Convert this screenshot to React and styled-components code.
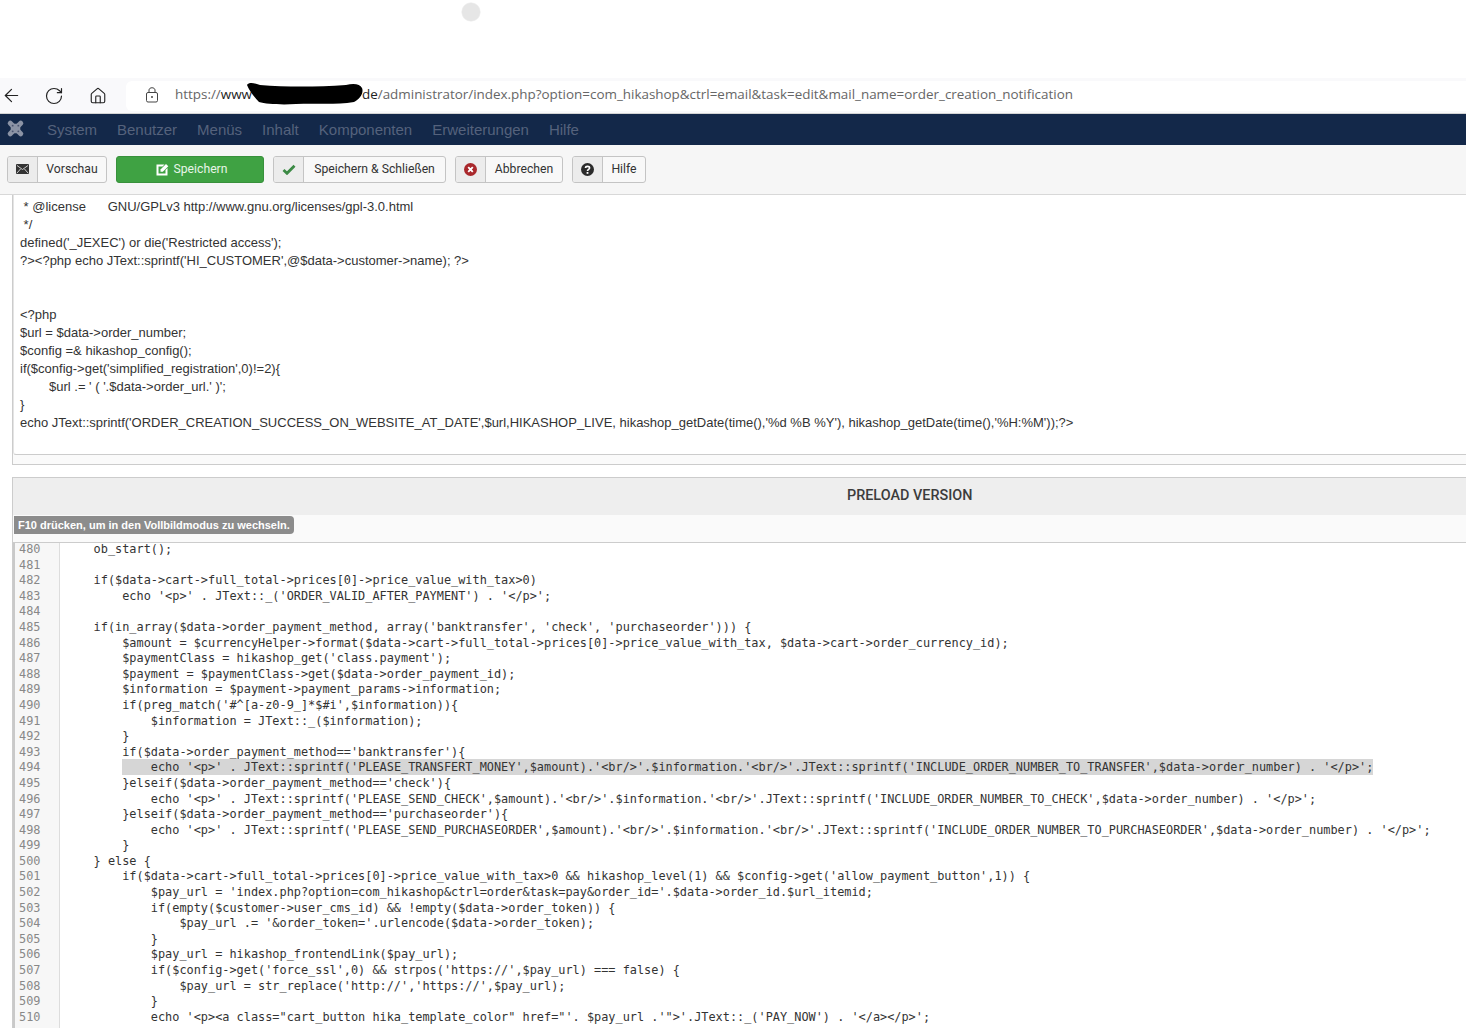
import styled, { createGlobalStyle } from 'styled-components';
import { ArrowLeft, RotateCw, Home } from 'lucide-react';

const GlobalStyle = createGlobalStyle`
  html, body {
    margin: 0;
    padding: 0;
    background: #ffffff;
  }
  body {
    font-family: 'Liberation Sans', Arial, sans-serif;
  }
`;

const Page = styled.div`
  width: 1466px;
  height: 1028px;
  overflow: hidden;
  position: relative;
  background: #fff;
`;

const BlankTop = styled.div`
  height: 78px;
  display: flex;
  padding-left: 461px;
  padding-top: 2px;
  box-sizing: border-box;
`;

const Spinner = styled.div`
  width: 20px;
  height: 20px;
  border-radius: 50%;
  background-color: #e6e6e6;
  background-image: radial-gradient(#a8a8a8 40%, transparent 45%);
  background-size: 2px 2px;
  mask-image: radial-gradient(circle, #000 60%, transparent 74%);
`;

const BrowserBar = styled.div`
  height: 35px;
  background: #f9f9fb;
  border-bottom: 1px solid #d4d4d4;
  display: flex;
  align-items: center;
  box-sizing: content-box;
`;

const NavIcon = styled.span`
  width: ${(p) => p.$w}px;
  display: flex;
  justify-content: center;
  color: #222;
`;

const UrlBox = styled.div`
  flex: 1;
  height: 30px;
  background: #fff;
  border-radius: 6px 0 0 6px;
  display: flex;
  align-items: center;
  padding-left: 19px;
  margin-left: 16px;
  color: #444;
`;

const LockIcon = styled.svg`
  width: 14px;
  height: 17px;
  flex: none;
  position: relative;
  top: -1px;
`;

const UrlText = styled.div`
  font-family: 'Open Sans', sans-serif;
  font-size: 13.43px;
  line-height: 18px;
  margin: -3px 0 0 16px;
  color: #666;
  white-space: pre;
  display: flex;
  align-items: center;
  b {
    font-weight: 400;
    color: #222;
  }
`;

const Scribble = styled.svg`
  margin: 0 -1px 0 -6px;
  width: 117px;
  height: 22px;
  flex: none;
  position: relative;
  top: 0;
`;

const NavBar = styled.nav`
  height: 31px;
  background: #132849;
  display: flex;
  align-items: center;
  padding-left: 6px;
`;

const NavItem = styled.span`
  font-size: 15px;
  color: #55627c;
  margin-right: 20px;
`;

const Logo = styled.svg`
  width: 19px;
  height: 19px;
  margin-right: 22px;
  position: relative;
  top: -1px;
`;

const Toolbar = styled.div`
  height: 50px;
  box-sizing: border-box;
  background: #f6f6f6;
  border-bottom: 1px solid #d8d8d8;
  display: flex;
  align-items: center;
  padding: 0 0 1px 7px;
  gap: 9px;
`;

const ToolButton = styled.div`
  height: 27px;
  box-sizing: border-box;
  border: 1px solid #c4c4c4;
  border-radius: 3px;
  background: #f8f8f8;
  display: flex;
  align-items: center;
  font-family: Roboto, sans-serif;
  font-size: 12.2px;
  color: #333;
  width: ${(p) => p.$w}px;
  flex: none;
  overflow: hidden;
`;

const ToolIcon = styled.span`
  width: 29px;
  height: 100%;
  flex: none;
  background: #ececec;
  border-right: 1px solid #c4c4c4;
  display: flex;
  align-items: center;
  justify-content: center;
`;

const ToolLabel = styled.span`
  flex: 1;
  text-align: center;
  white-space: nowrap;
`;

const SaveButton = styled.div`
  width: 148px;
  height: 27px;
  border-radius: 3px;
  background: #3fa243;
  border: 1px solid #38913c;
  box-sizing: border-box;
  color: #e8f5e8;
  font-family: Roboto, sans-serif;
  font-size: 12.2px;
  display: flex;
  align-items: center;
  justify-content: center;
  gap: 5px;
  flex: none;
  padding-left: 3px;
`;

const SourcePanel = styled.div`
  margin-left: 12px;
  border-left: 1px solid #cccccc;
  border-bottom: 1px solid #cccccc;
  background: #fafafa;
  height: 270px;
  box-sizing: border-box;
`;

const SourceInner = styled.div`
  height: 260px;
  box-sizing: border-box;
  background: #fff;
  border-bottom: 1px solid #cccccc;
  padding: 3px 0 0 6px;
  border-left: 1px solid #e4e4e4;
  border-radius: 0 0 0 3px;
`;

const SourceLine = styled.div`
  font-size: 13px;
  line-height: 18px;
  height: 18px;
  color: #333;
  white-space: pre;
  padding-left: ${(p) => p.$indent || 0}px;
`;

const EditorPanel = styled.div`
  margin: 12px 0 0 12px;
  border-left: 1px solid #cccccc;
  border-top: 1px solid #cccccc;
`;

const EditorHead = styled.div`
  height: 37px;
  box-sizing: border-box;
  padding: 0 0 2px 834px;
  background: #eeeeee;
  display: flex;
  align-items: center;
  font-family: Roboto, sans-serif;
  font-size: 14.4px;
  font-weight: 500;
  color: #3c3c3c;
`;

const HintRow = styled.div`
  height: 28px;
  box-sizing: border-box;
  background: #fafafa;
  border-bottom: 1px solid #cccccc;
`;

const Hint = styled.span`
  display: inline-block;
  height: 18px;
  line-height: 18px;
  padding: 0 4px;
  margin-left: 1px;
  background: #8c8c8c;
  color: #fff;
  font-size: 11px;
  font-weight: 700;
  border-radius: 0 4px 4px 0;
  white-space: nowrap;
`;

const CodeArea = styled.div`
  border-left: 2px solid #c9c9c9;
  display: flex;
  flex-direction: column;
`;

const CodeRow = styled.div`
  display: flex;
  height: 15.6px;
  line-height: 12px;
  font-family: 'DejaVu Sans Mono', monospace;
  font-size: 11.88px;
  color: #333;
  white-space: pre;
`;

const Gutter = styled.span`
  width: 45px;
  box-sizing: border-box;
  padding-left: 4px;
  flex: none;
  color: #888;
  background: #f7f7f7;
  border-right: 1px solid #dddddd;
`;

const Code = styled.span`
  padding-left: 5px;
`;

const Mark = styled.span`
  background: #d6d6d6;
  padding: 1px 0;
`;

const navItems = ['System', 'Benutzer', 'Menüs', 'Inhalt', 'Komponenten', 'Erweiterungen', 'Hilfe'];

const sourceLines = [
  { t: ' * @license', extra: 'GNU/GPLv3 http://www.gnu.org/licenses/gpl-3.0.html' },
  { t: ' */' },
  { t: "defined('_JEXEC') or die('Restricted access');" },
  { t: "?><?php echo JText::sprintf('HI_CUSTOMER',@$data->customer->name); ?>" },
  { t: '' },
  { t: '' },
  { t: '<?php' },
  { t: '$url = $data->order_number;' },
  { t: '$config =& hikashop_config();' },
  { t: "if($config->get('simplified_registration',0)!=2){" },
  { t: "$url .= ' ( '.$data->order_url.' )';", indent: 29 },
  { t: '}' },
  { t: "echo JText::sprintf('ORDER_CREATION_SUCCESS_ON_WEBSITE_AT_DATE',$url,HIKASHOP_LIVE, hikashop_getDate(time(),'%d %B %Y'), hikashop_getDate(time(),'%H:%M'));?>" },
];

const codeLines = [
  '    ob_start();',
  '',
  '    if($data->cart->full_total->prices[0]->price_value_with_tax>0)',
  "        echo '<p>' . JText::_('ORDER_VALID_AFTER_PAYMENT') . '</p>';",
  '',
  "    if(in_array($data->order_payment_method, array('banktransfer', 'check', 'purchaseorder'))) {",
  '        $amount = $currencyHelper->format($data->cart->full_total->prices[0]->price_value_with_tax, $data->cart->order_currency_id);',
  "        $paymentClass = hikashop_get('class.payment');",
  '        $payment = $paymentClass->get($data->order_payment_id);',
  '        $information = $payment->payment_params->information;',
  "        if(preg_match('#^[a-z0-9_]*$#i',$information)){",
  '            $information = JText::_($information);',
  '        }',
  "        if($data->order_payment_method=='banktransfer'){",
  "            echo '<p>' . JText::sprintf('PLEASE_TRANSFERT_MONEY',$amount).'<br/>'.$information.'<br/>'.JText::sprintf('INCLUDE_ORDER_NUMBER_TO_TRANSFER',$data->order_number) . '</p>';",
  "        }elseif($data->order_payment_method=='check'){",
  "            echo '<p>' . JText::sprintf('PLEASE_SEND_CHECK',$amount).'<br/>'.$information.'<br/>'.JText::sprintf('INCLUDE_ORDER_NUMBER_TO_CHECK',$data->order_number) . '</p>';",
  "        }elseif($data->order_payment_method=='purchaseorder'){",
  "            echo '<p>' . JText::sprintf('PLEASE_SEND_PURCHASEORDER',$amount).'<br/>'.$information.'<br/>'.JText::sprintf('INCLUDE_ORDER_NUMBER_TO_PURCHASEORDER',$data->order_number) . '</p>';",
  '        }',
  '    } else {',
  "        if($data->cart->full_total->prices[0]->price_value_with_tax>0 && hikashop_level(1) && $config->get('allow_payment_button',1)) {",
  "            $pay_url = 'index.php?option=com_hikashop&ctrl=order&task=pay&order_id='.$data->order_id.$url_itemid;",
  '            if(empty($customer->user_cms_id) && !empty($data->order_token)) {',
  "                $pay_url .= '&order_token='.urlencode($data->order_token);",
  '            }',
  '            $pay_url = hikashop_frontendLink($pay_url);',
  "            if($config->get('force_ssl',0) && strpos('https://',$pay_url) === false) {",
  "                $pay_url = str_replace('http://','https://',$pay_url);",
  '            }',
  "            echo '<p><a class=\"cart_button hika_template_color\" href=\"'. $pay_url .'\">'.JText::_('PAY_NOW') . '</a></p>';",
];

function CodeLine({ number, text }) {
  // line 494 is the selected one in the editor
  const selected = number === 494;
  return (
    <CodeRow>
      <Gutter>{number}</Gutter>
      <Code>
        {selected ? (
          <>
            {text.slice(0, 8)}
            <Mark>{text.slice(8)}</Mark>
          </>
        ) : (
          text
        )}
      </Code>
    </CodeRow>
  );
}

function App() {
  return (
    <Page>
      <GlobalStyle />
      <BlankTop>
        <Spinner />
      </BlankTop>
      <BrowserBar>
        <NavIcon $w={22}>
          <ArrowLeft size={21} strokeWidth={1.4} />
        </NavIcon>
        <NavIcon $w={64}>
          <RotateCw size={20} strokeWidth={1.4} />
        </NavIcon>
        <NavIcon $w={24}>
          <Home size={18} strokeWidth={1.5} />
        </NavIcon>
        <UrlBox>
          <LockIcon viewBox="0 0 14 17">
            <rect x="1.5" y="6.5" width="11" height="9.5" rx="1.5" fill="none" stroke="#444" strokeWidth="1" />
            <path d="M4 6.5 V4 C4 1 10 1 10 4 V6.5" fill="none" stroke="#444" strokeWidth="1" />
            <circle cx="7" cy="11" r="1" fill="#444" />
          </LockIcon>
          <UrlText>
            https://<b>www</b>
            <Scribble viewBox="0 0 117 22">
              <path
                d="M1 2 C3 -1 8 0 14 2 C40 4 70 4 100 2 C108 0 114 1 116 5 C118 10 114 16 108 19 C90 22 70 20 50 21 C35 22 20 21 13 19 C8 14 3 7 1 2 Z"
                fill="#000"
              />
            </Scribble>
            <b>de</b>/administrator/index.php?option=com_hikashop&amp;ctrl=email&amp;task=edit&amp;mail_name=order_creation_notification
          </UrlText>
        </UrlBox>
      </BrowserBar>
      <NavBar>
        <Logo viewBox="0 0 20 20">
          <g stroke="#8b93a5" strokeWidth="5.4" strokeLinecap="round" fill="none">
            <path d="M4.5 4.5 L15.5 15.5" />
            <path d="M15.5 4.5 L4.5 15.5" />
          </g>
          <rect x="5" y="5" width="10" height="10" fill="#8b93a5" />
          <g fill="#4a5570">
            <circle cx="7" cy="7" r="1" />
            <circle cx="13" cy="7" r="1" />
            <circle cx="7" cy="13" r="1" />
            <circle cx="13" cy="13" r="1" />
          </g>
        </Logo>
        {navItems.map((item) => (
          <NavItem key={item}>{item}</NavItem>
        ))}
      </NavBar>
      <Toolbar>
        <ToolButton $w={100}>
          <ToolIcon>
            <svg width="13" height="10" viewBox="0 0 13 10">
              <rect width="13" height="10" rx="1" fill="#333" />
              <path d="M1 1.5 L6.5 5.5 L12 1.5 M1 9 L4.5 5 M12 9 L8.5 5" stroke="#ddd" strokeWidth="0.9" fill="none" />
            </svg>
          </ToolIcon>
          <ToolLabel>Vorschau</ToolLabel>
        </ToolButton>
        <SaveButton>
          <svg width="13" height="13" viewBox="0 0 13 13">
            <path d="M0.5 1.5 H8.5 L6.5 3.5 H2.5 V10.5 H9.5 V7 L11.5 5 V12.5 H0.5 Z" fill="#fff" />
            <path d="M4.5 6.5 L10 1 L12.3 3.3 L6.8 8.8 H4.5 Z" fill="#fff" />
          </svg>
          Speichern
        </SaveButton>
        <ToolButton $w={173}>
          <ToolIcon>
            <svg width="14" height="11" viewBox="0 0 14 11">
              <path d="M1.5 6 L5 9.3 L12.5 1.7" stroke="#3c8a45" strokeWidth="2.8" fill="none" />
            </svg>
          </ToolIcon>
          <ToolLabel>Speichern &amp; Schließen</ToolLabel>
        </ToolButton>
        <ToolButton $w={108}>
          <ToolIcon>
            <svg width="13" height="13" viewBox="0 0 13 13">
              <circle cx="6.5" cy="6.5" r="6.5" fill="#a9282c" />
              <path d="M4.2 4.2 L8.8 8.8 M8.8 4.2 L4.2 8.8" stroke="#fff" strokeWidth="1.9" />
            </svg>
          </ToolIcon>
          <ToolLabel>Abbrechen</ToolLabel>
        </ToolButton>
        <ToolButton $w={74}>
          <ToolIcon>
            <svg width="13" height="13" viewBox="0 0 13 13">
              <circle cx="6.5" cy="6.5" r="6.5" fill="#2b2b2b" />
              <path d="M4.5 5 C4.5 2.8 8.6 2.8 8.6 5 C8.6 6.4 6.5 6.3 6.5 8" stroke="#fff" strokeWidth="1.6" fill="none" />
              <rect x="5.6" y="9" width="1.8" height="1.8" fill="#fff" />
            </svg>
          </ToolIcon>
          <ToolLabel>Hilfe</ToolLabel>
        </ToolButton>
      </Toolbar>
      <SourcePanel>
        <SourceInner>
          {sourceLines.map((line, i) =>
            line.extra ? (
              <SourceLine key={i}>
                {line.t}
                {'      '}
                {line.extra}
              </SourceLine>
            ) : (
              <SourceLine key={i} $indent={line.indent}>
                {line.t}
              </SourceLine>
            ),
          )}
        </SourceInner>
      </SourcePanel>
      <EditorPanel>
        <EditorHead>PRELOAD VERSION</EditorHead>
        <HintRow>
          <Hint>F10 drücken, um in den Vollbildmodus zu wechseln.</Hint>
        </HintRow>
        <CodeArea>
          {codeLines.map((text, i) => (
            <CodeLine key={i} number={480 + i} text={text} />
          ))}
          <CodeRow>
            <Gutter />
          </CodeRow>
        </CodeArea>
      </EditorPanel>
    </Page>
  );
}

export default App;
